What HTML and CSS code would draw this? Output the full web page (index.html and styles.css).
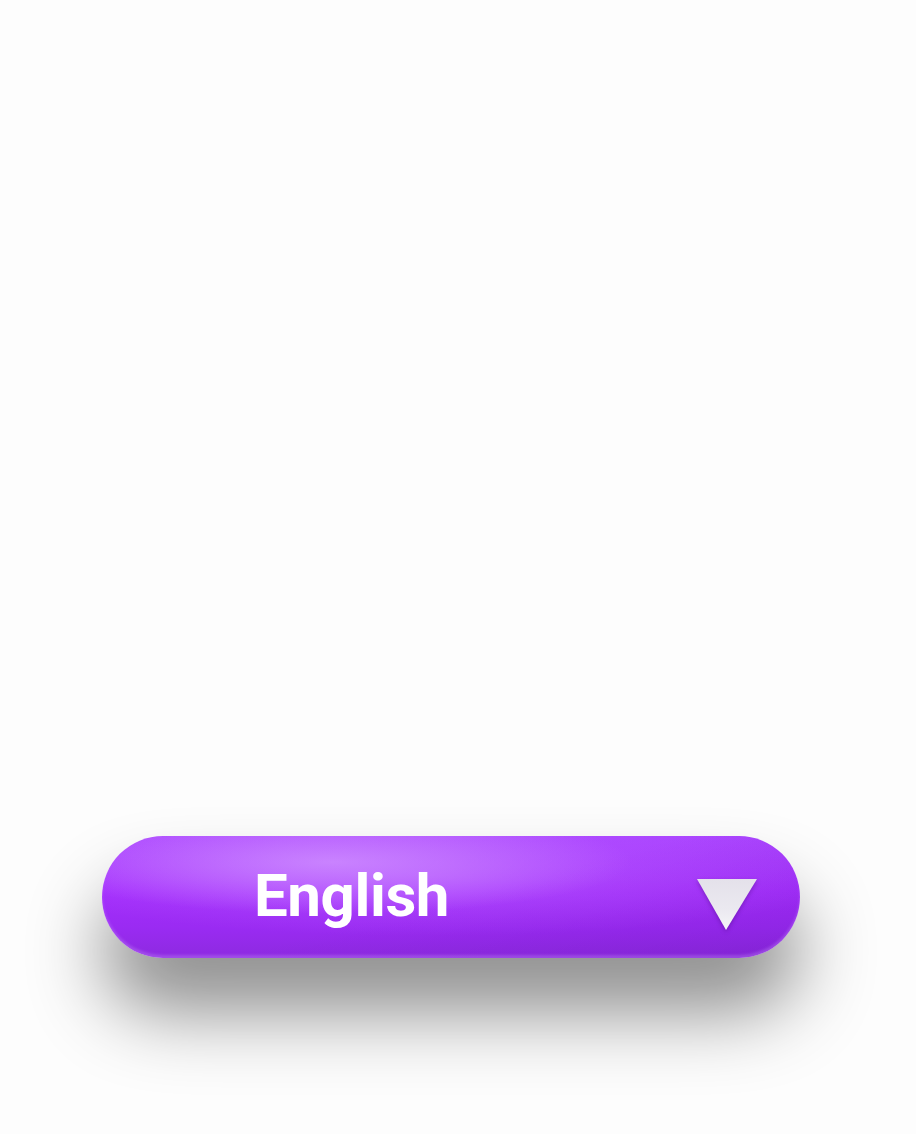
FILE: index.html
```html
<!DOCTYPE html>
<html lang="en">
<head>
<meta charset="utf-8">
<title>Language select</title>
<link rel="stylesheet" href="styles.css">
</head>
<body>
<main class="stage">
  <button class="pill" type="button">
    <span class="label">English</span>
    <svg class="caret" width="62" height="54" viewBox="0 0 62 54" aria-hidden="true">
      <defs>
        <linearGradient id="cg" x1="0" y1="0" x2="0" y2="1">
          <stop offset="0" stop-color="#e4e1ea"/>
          <stop offset="0.6" stop-color="#ebe9f0"/>
          <stop offset="1" stop-color="#f6f5f8"/>
        </linearGradient>
      </defs>
      <polygon points="1,1 61,1 30,52" fill="url(#cg)"/>
    </svg>
  </button>
</main>
</body>
</html>
```
FILE: styles.css
```css
html, body {
  margin: 0;
  padding: 0;
  background: #fdfdfd;
}
.stage {
  height: 1134px;
  display: flex;
  flex-direction: column;
  justify-content: flex-end;
  padding: 0 0 176px 102px;
  box-sizing: border-box;
}
.pill {
  width: 698px;
  height: 122px;
  border: 0;
  border-radius: 61px;
  display: flex;
  align-items: center;
  padding: 0 42px 0 152px;
  box-sizing: border-box;
  cursor: pointer;
  background:
    radial-gradient(ellipse 300px 52px at 230px 26px, rgba(208,145,255,0.8), rgba(208,145,255,0) 100%),
    radial-gradient(ellipse 420px 60px at 330px 40px, rgba(190,110,255,0.45), rgba(190,110,255,0) 100%),
    linear-gradient(165deg, rgba(0,0,0,0) 50%, rgba(70,0,140,0.16) 100%),
    linear-gradient(180deg, #ab45ff 0%, #a42efd 45%, #9a2bf2 75%, #8d2ae0 100%);
  box-shadow:
    inset 0 -3px 3px rgba(210,160,255,0.3),
    0 54px 76px rgba(0,0,0,0.44);
}
.label {
  font-family: Roboto, "Liberation Sans", Arial, sans-serif;
  font-weight: 700;
  font-size: 60px;
  letter-spacing: -0.4px;
  line-height: 1;
  color: #ffffff;
  margin-top: -2px;
}
.caret {
  margin-left: auto;
  margin-top: 16px;
  filter: drop-shadow(0 2px 2px rgba(60,0,110,0.35));
}
```
